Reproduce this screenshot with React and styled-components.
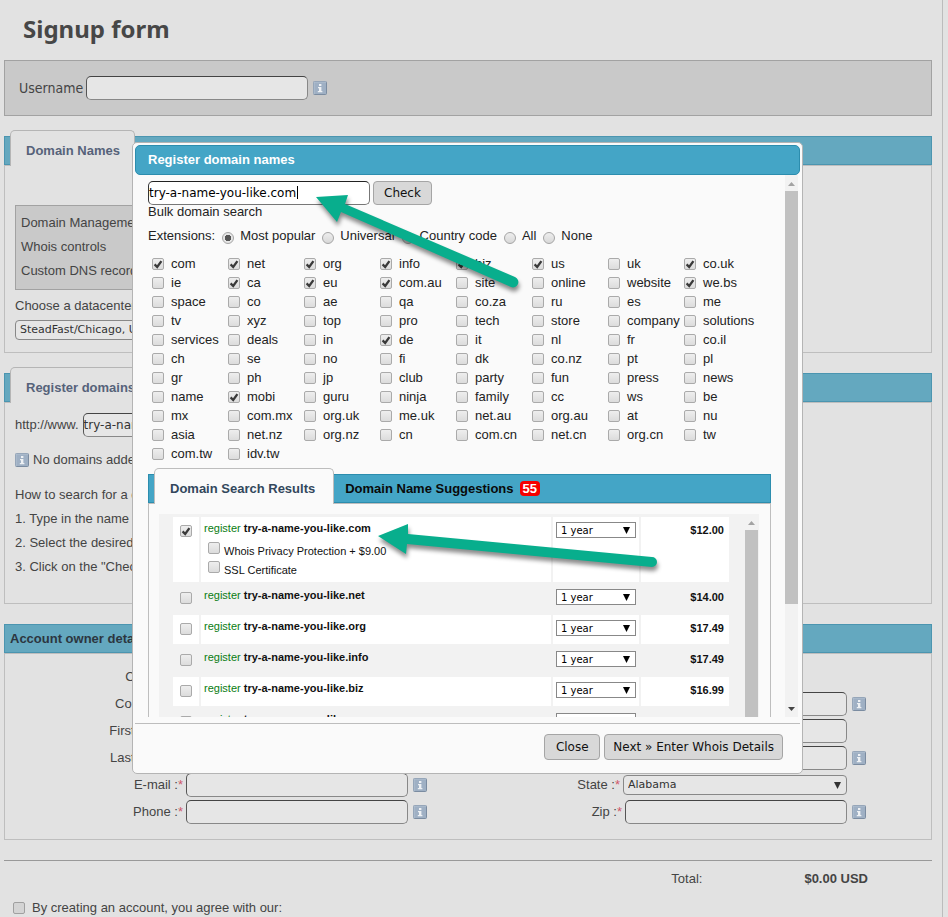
import React from "react";
import styled, { createGlobalStyle, css } from "styled-components";

const sans = '"Liberation Sans", Arial, sans-serif';
const wide = '"DejaVu Sans", Verdana, sans-serif';
const condensed = '"DejaVu Sans Condensed", Tahoma, sans-serif';

const svgUrl = (body, w, h) =>
  `url("data:image/svg+xml,${encodeURIComponent(
    `<svg xmlns='http://www.w3.org/2000/svg' width='${w}' height='${h}' viewBox='0 0 ${w} ${h}'>${body}</svg>`
  )}")`;

const checkMark = svgUrl(
  "<path d='M1.6 5.4L4.2 8L8.4 2.2' fill='none' stroke='#3a3a3a' stroke-width='2.3'/>",
  10,
  10
);
const triangle = (color) => svgUrl(`<path d='M0 0H7L3.5 7Z' fill='${color}'/>`, 7, 7);

const GlobalStyle = createGlobalStyle`
  *, *::before, *::after { box-sizing: border-box; }
  body {
    margin: 0;
    background: #e2e2e2;
    color: #444;
    font: 13px/24px ${sans};
  }
  h1, h2, p, ol { margin: 0; padding: 0; }
  input, select, button { margin: 0; font-family: ${wide}; }
`;

const Page = styled.div`
  height: 100vh;
  overflow: hidden;
  margin-right: 5px;
  padding: 0 10px 0 4px;
  border-right: 1px solid #bcbcbc;
`;

const Title = styled.h1`
  height: 60px;
  padding: 0 19px;
  font: bold 24px/57px "Noto Sans", Tahoma, sans-serif;
  color: #474747;
`;

const UserPanel = styled.div`
  display: flex;
  align-items: center;
  gap: 3px;
  height: 56px;
  padding: 0 14px;
  background: #c9c9c9;
  border: 1px solid #a2a2a2;
  font: 14px/24px ${condensed};
`;

const TextInput = styled.input`
  width: 222px;
  height: 24px;
  padding: 0;
  border: 1px solid #888;
  border-top-color: #444;
  border-left-color: #555;
  border-radius: 5px;
  background: #e6e6e6;
  color: #333;
  font-size: 12px;
  outline: none;
`;

const SearchInput = styled(TextInput)`
  color: #000;
  border-color: #222 #777 #777 #333;
  background: linear-gradient(#000, #000) 148px 4px / 1px 13px no-repeat #fff;
`;

const Section = styled.section`
  margin-top: 20px;
`;

const Bar = styled.div`
  display: flex;
  align-items: flex-start;
  height: 29px;
  padding: 0 5px;
  background: ${(p) => (p.$bright ? "#44a5c6" : "#64a8bf")};
  border: 1px solid ${(p) => (p.$bright ? "#2c8dae" : "#4b95b0")};
`;

const tabText = css`
  font: bold 13px/40px ${sans};
`;

const Tab = styled.button`
  ${tabText}
  position: relative;
  z-index: 1;
  height: 36px;
  margin-top: -7px;
  padding: ${(p) => (p.$bright ? "0 18px 0 15px" : "0 14px 0 15px")};
  border: 1px solid ${(p) => (p.$bright ? "#bdbdbd" : "#b5b5b5")};
  border-bottom: 0;
  border-radius: 5px 5px 0 0;
  background: ${(p) => (p.$bright ? "#fafafa" : "#e2e2e2")};
  color: ${(p) => (p.$bright ? "#32475c" : "#56627a")};
  white-space: nowrap;
`;

const SideTab = styled.button`
  display: flex;
  align-items: center;
  gap: 6px;
  height: 27px;
  padding: 0 11px;
  border: 0;
  background: none;
  color: #0a0a0a;
  font: bold 13px/27px ${sans};
`;

const Count = styled.span`
  padding: 0 3px;
  border-radius: 4px;
  background: #f60000;
  color: #fff;
  line-height: 15px;
`;

const BarTitle = styled.h2`
  font: bold 13px/27px ${sans};
  color: #2c3640;
`;

const Body = styled.div`
  padding: ${(p) => p.$pad};
  border: 1px solid #bebebe;
`;

const LinkBox = styled.div`
  width: 75%;
  padding: 5px 5px 6px;
  background: #c9c9c9;
  border: 1px solid #a2a2a2;
`;

const FieldLabel = styled.label`
  display: block;
  margin-top: 4px;
`;

const Select = styled.select`
  appearance: none;
  display: block;
  width: ${(p) => p.$width};
  height: ${(p) => (p.$small ? "16px" : "20px")};
  padding: ${(p) => (p.$small ? "1px 4px 0" : "0 4px")};
  border: 1px solid #888;
  border-radius: ${(p) => (p.$small ? "0" : "4px")};
  background: ${(p) => (p.$small ? triangle("#000") : triangle("#333"))} no-repeat right 5px center
    ${(p) => (p.$small ? "#fff" : "#e6e6e6")};
  color: ${(p) => (p.$small ? "#000" : "#333")};
  font-size: ${(p) => (p.$small ? "10px" : "11px")};
  line-height: 14px;
`;

const Line = styled.div`
  display: flex;
  align-items: center;
  gap: 4px;
  height: 24px;
  margin-top: ${(p) => p.$top || 0};
`;

const Steps = styled.ol`
  margin-top: 11px;
  list-style: none;
`;

const InfoSvg = styled.svg`
  display: block;
  flex: none;
`;

const Info = () => (
  <InfoSvg width="14" height="14" viewBox="0 0 14 14" aria-hidden="true">
    <rect x="0.5" y="0.5" width="13" height="13" rx="1" fill="#9fb0c4" stroke="#7b8ca1" />
    <path d="M1 13V1H13" fill="none" stroke="#b3c1d1" />
    <path d="M6 3H8.4V5H6ZM5 6H8.4V10H9.4V11.2H4.8V10H6V7.2H5Z" fill="#eef1f4" />
  </InfoSvg>
);

const Fields = styled.div`
  display: grid;
  grid-template-columns: 1fr 1fr;
  gap: 3px 0;
`;

const Field = styled.div`
  display: flex;
  align-items: center;
  justify-content: flex-end;
  gap: 3px;
  height: 24px;
`;

const InfoSlot = styled.span`
  width: 33px;
  padding-left: 2px;
`;

const Star = styled.span`
  color: #d0586a;
`;

const Rule = styled.hr`
  height: 1px;
  margin: 20px 0 6px;
  border: 0;
  background: #999;
`;

const Total = styled.div`
  display: flex;
  justify-content: flex-end;
  gap: 102px;
  padding-right: 64px;
`;

const Agree = styled.label`
  display: flex;
  align-items: center;
  gap: 7px;
  margin-top: 5px;
  padding-left: 9px;
`;

const Check = styled.input`
  appearance: none;
  flex: none;
  width: 12px;
  height: 12px;
  border: 1px solid ${(p) => (p.$dim ? "#a0a0a0" : "#aaa")};
  border-radius: 2px;
  background: linear-gradient(#eee, #dcdcdc);
  ${(p) => p.$dim && "background: #d4d4d4;"}
  &:checked {
    background: ${checkMark} no-repeat center, linear-gradient(#eee, #dcdcdc);
  }
`;

const Radio = styled.input`
  appearance: none;
  width: 12px;
  height: 12px;
  border: 1px solid #a5a5a5;
  border-radius: 50%;
  background: linear-gradient(#eee, #d8d8d8);
  &:checked {
    background: radial-gradient(circle, #555 0 3px, transparent 3px), #e6e6e6;
  }
`;

const Overlay = styled.div`
  position: fixed;
  inset: 0;
  z-index: 2;
  display: flex;
  justify-content: center;
  align-items: flex-start;
  padding: 142px 13px 0 0;
`;

const Dialog = styled.div`
  width: 671px;
  max-width: 100%;
  padding: 2px;
  background: #fafafa;
  border: 1px solid #b4b4b4;
  border-radius: 5px;
  color: #222;
`;

const DialogTitle = styled.h2`
  padding: 0 12px 1px;
  border: 1px solid #2c8dae;
  border-radius: 5px;
  background: #44a5c6;
  color: #fff;
  font: bold 13px/27px ${sans};
`;

const ScrollFrame = styled.div`
  display: flex;
  height: ${(p) => p.$height};
  overflow: hidden;
  padding-right: ${(p) => p.$right};
  background: ${(p) => p.$bg};
`;

const ScrollContent = styled.div`
  flex: 1;
  min-width: 0;
  padding: ${(p) => p.$pad};
`;

const Track = styled.div`
  display: flex;
  flex-direction: column;
  align-items: center;
  width: 13px;
  padding: ${(p) => p.$pad};
  background: #f2f2f2;
`;

const Thumb = styled.div`
  flex: ${(p) => p.$grow};
  width: 13px;
  margin-top: 5px;
  background: #c1c1c1;
`;

const Spacer = styled.div`
  flex: 1;
`;

const ArrowSvg = styled.svg`
  display: block;
  flex: none;
`;

const ScrollArrow = ({ down }) => (
  <ArrowSvg width="7" height="4" viewBox="0 0 7 4" aria-hidden="true">
    <path d={down ? "M0 0H7L3.5 4Z" : "M0 4H7L3.5 0Z"} fill={down ? "#444" : "#a3a3a3"} />
  </ArrowSvg>
);

const SearchRow = styled.form`
  display: flex;
  gap: 3px;
`;

const Button = styled.button`
  min-width: 56px;
  height: ${(p) => (p.$tall ? "26px" : "24px")};
  padding: ${(p) => (p.$tall ? "0 8px" : "0 10px")};
  border: 1px solid #a5a5a5;
  border-radius: 4px;
  background: #d8d8d8;
  color: #111;
  font-size: 12px;
  white-space: nowrap;
`;

const BulkText = styled.p`
  line-height: 14px;
`;

const RadioRow = styled.div`
  display: flex;
  align-items: center;
  margin-top: 5px;
  line-height: 24px;
`;

const RadioLabel = styled.label`
  display: flex;
  align-items: center;
  gap: 6px;
  margin-left: 7px;
  line-height: 24px;
  & > input {
    margin-top: 4px;
  }
`;

const ExtGrid = styled.div`
  display: grid;
  grid-template-columns: repeat(8, 76px);
  margin-top: 6px;
  padding-left: 4px;
`;

const ExtLabel = styled.label`
  display: flex;
  align-items: center;
  gap: 7px;
  height: 19px;
  line-height: 19px;
  white-space: nowrap;
`;

const ResultTabs = styled.div`
  margin: 11px 14px 0 0;
`;

const ResultPane = styled.div`
  padding: 10px 11px 0 10px;
  border: 1px solid #bebebe;
`;

const Table = styled.table`
  width: 100%;
  border-spacing: 2px;
  font: 11px/14px ${sans};
  color: #111;
`;

const Row = styled.tr`
  height: 29px;
  background: ${(p) => (p.$odd ? "#fff" : "transparent")};
`;

const Cell = styled.td`
  padding: ${(p) => p.$pad || "4px 3px 0"};
  width: ${(p) => p.$width || "auto"};
  vertical-align: top;
  text-align: ${(p) => p.$align || "left"};
  font-weight: ${(p) => (p.$align === "right" ? "bold" : "normal")};
`;

const RegisterLink = styled.a`
  color: #0a7d12;
  text-decoration: none;
`;

const Options = styled.div`
  padding: 7px 0 2px 4px;
`;

const Option = styled.label`
  display: flex;
  align-items: flex-start;
  gap: 4px;
  height: 19px;
  line-height: 19px;
`;

const Footer = styled.div`
  display: flex;
  justify-content: flex-end;
  gap: 4px;
  margin-top: 6px;
  padding: 10px 17px 11px;
  border-top: 1px solid #bdbdbd;
`;

const Annotations = styled.svg`
  position: fixed;
  top: 0;
  left: 0;
  z-index: 3;
  pointer-events: none;
  filter: drop-shadow(1px 4px 2px rgba(0, 0, 0, 0.45));
`;

const extensions = (
  "com net org info biz us uk co.uk " +
  "ie ca eu com.au site online website we.bs " +
  "space co ae qa co.za ru es me " +
  "tv xyz top pro tech store company solutions " +
  "services deals in de it nl fr co.il " +
  "ch se no fi dk co.nz pt pl " +
  "gr ph jp club party fun press news " +
  "name mobi guru ninja family cc ws be " +
  "mx com.mx org.uk me.uk net.au org.au at nu " +
  "asia net.nz org.nz cn com.cn net.cn org.cn tw " +
  "com.tw idv.tw"
).split(" ");
const popular = "com net org info biz us co.uk ca eu com.au we.bs de mobi".split(" ");
const groups = ["Most popular", "Universal", "Country code", "All", "None"];

const results = [
  { tld: "com", price: "$12.00", selected: true },
  { tld: "net", price: "$14.00" },
  { tld: "org", price: "$17.49" },
  { tld: "info", price: "$17.49" },
  { tld: "biz", price: "$16.99" },
  { tld: "us", price: "$16.99" },
];

const ownerFields = [
  { id: "country", label: "Country :" },
  null,
  { id: "company", label: "Company :", info: true },
  { id: "address", label: "Address :", info: true },
  { id: "first", label: "First name :", info: true },
  { id: "address2", label: "Address 2 :" },
  { id: "last", label: "Last name :", info: true },
  { id: "city", label: "City :", info: true },
  { id: "email", label: "E-mail :", info: true },
  { id: "state", label: "State :", choice: "Alabama" },
  { id: "phone", label: "Phone :", info: true },
  { id: "zip", label: "Zip :", info: true },
];

function OwnerField({ field }) {
  if (!field) return <Field />;
  const { id, label, info, choice } = field;
  return (
    <Field>
      <label htmlFor={id}>
        {label}
        <Star>*</Star>
      </label>
      {choice ? (
        <Select id={id} $width="224px" defaultValue={choice}>
          <option>{choice}</option>
        </Select>
      ) : (
        <TextInput id={id} />
      )}
      <InfoSlot>{info && <Info />}</InfoSlot>
    </Field>
  );
}

function ResultRow({ result, odd }) {
  const name = `try-a-name-you-like.${result.tld}`;
  return (
    <Row $odd={odd}>
      <Cell $width="26px" $pad="8px 7px 0">
        <Check type="checkbox" defaultChecked={result.selected} aria-label={name} />
      </Cell>
      <Cell>
        <RegisterLink href="#register">register</RegisterLink> <b>{name}</b>
        {result.selected && (
          <Options>
            <Option>
              <Check type="checkbox" /> Whois Privacy Protection + $9.00
            </Option>
            <Option>
              <Check type="checkbox" /> SSL Certificate
            </Option>
          </Options>
        )}
      </Cell>
      <Cell $width="86px" $pad="5px 3px 0">
        <Select $small $width="80px" aria-label={`Period for ${name}`} defaultValue="1 year">
          <option>1 year</option>
        </Select>
      </Cell>
      <Cell $width="88px" $align="right" $pad="6px 5px 0">
        {result.price}
      </Cell>
    </Row>
  );
}

function RegisterDialog() {
  return (
    <Overlay>
      <Dialog role="dialog" aria-labelledby="dialog-title">
        <DialogTitle id="dialog-title">Register domain names</DialogTitle>
        <ScrollFrame $height="542px" $right="2px" $bg="#fafafa">
          <ScrollContent $pad="6px 0 0 13px">
            <SearchRow onSubmit={(e) => e.preventDefault()}>
              <SearchInput aria-label="Domain name" defaultValue="try-a-name-you-like.com" />
              <Button>Check</Button>
            </SearchRow>
            <BulkText>Bulk domain search</BulkText>
            <RadioRow>
              Extensions:
              {groups.map((g, i) => (
                <RadioLabel key={g}>
                  <Radio type="radio" name="group" defaultChecked={i === 0} />
                  {g}
                </RadioLabel>
              ))}
            </RadioRow>
            <ExtGrid>
              {extensions.map((e) => (
                <ExtLabel key={e}>
                  <Check type="checkbox" defaultChecked={popular.includes(e)} />
                  {e}
                </ExtLabel>
              ))}
            </ExtGrid>
            <ResultTabs>
              <Bar $bright>
                <Tab $bright>Domain Search Results</Tab>
                <SideTab>
                  Domain Name Suggestions <Count>55</Count>
                </SideTab>
              </Bar>
              <ResultPane>
                <ScrollFrame $height="240px" $right="1px" $bg="#f2f2f2">
                  <ScrollContent $pad="1px 14px 0 12px">
                    <Table>
                      <tbody>
                        {results.map((r, i) => (
                          <ResultRow key={r.tld} result={r} odd={i % 2 === 0} />
                        ))}
                      </tbody>
                    </Table>
                  </ScrollContent>
                  <Track $pad="7px 0 0">
                    <ScrollArrow />
                    <Thumb $grow="1" />
                  </Track>
                </ScrollFrame>
              </ResultPane>
            </ResultTabs>
          </ScrollContent>
          <Track $pad="7px 0 6px">
            <ScrollArrow />
            <Thumb $grow="4" />
            <Spacer />
            <ScrollArrow down />
          </Track>
        </ScrollFrame>
        <Footer>
          <Button $tall>Close</Button>
          <Button $tall>Next » Enter Whois Details</Button>
        </Footer>
      </Dialog>
    </Overlay>
  );
}

export default function App() {
  return (
    <>
      <GlobalStyle />
      <Page>
        <Title>Signup form</Title>
        <UserPanel>
          <label htmlFor="username">Username</label>
          <TextInput id="username" />
          <InfoSlot>
            <Info />
          </InfoSlot>
        </UserPanel>

        <Section>
          <Bar>
            <Tab>Domain Names</Tab>
          </Bar>
          <Body $pad="39px 10px 10px">
            <LinkBox>
              <p>Domain Management</p>
              <p>Whois controls</p>
              <p>Custom DNS records</p>
            </LinkBox>
            <FieldLabel htmlFor="datacenter">Choose a datacenter</FieldLabel>
            <Line>
              <Select id="datacenter" $width="220px" defaultValue="SteadFast/Chicago, USA">
                <option>SteadFast/Chicago, USA</option>
              </Select>
            </Line>
          </Body>
        </Section>

        <Section>
          <Bar>
            <Tab>Register domains</Tab>
          </Bar>
          <Body $pad="10px 10px 24px">
            <Line>
              <label htmlFor="www">http://www.</label>
              <TextInput id="www" defaultValue="try-a-name-you-like.com" />
            </Line>
            <Line $top="11px">
              <Info />
              No domains added
            </Line>
            <Steps>
              <li>How to search for a domain</li>
              <li>1. Type in the name of the domain</li>
              <li>2. Select the desired extensions</li>
              <li>3. Click on the "Check" button</li>
            </Steps>
          </Body>
        </Section>

        <Section>
          <Bar>
            <BarTitle>Account owner details</BarTitle>
          </Bar>
          <Body $pad="11px 48px 15px 0">
            <Fields>
              {ownerFields.map((f, i) => (
                <OwnerField key={i} field={f} />
              ))}
            </Fields>
          </Body>
        </Section>

        <Rule />
        <Total>
          <span>Total:</span>
          <b>$0.00 USD</b>
        </Total>
        <Agree>
          <Check type="checkbox" $dim />
          By creating an account, you agree with our:
        </Agree>
      </Page>

      <RegisterDialog />

      <Annotations width="948" height="917" viewBox="0 0 948 917" aria-hidden="true">
        <path
          d="M316 197L348 195L345 204L515 277A5 5 0 0 1 511 287L341 212L337 222Z"
          fill="#08ae8d"
        />
        <path
          d="M378 536L408 524L408 534L652 557A5 5 0 0 1 652 567L407 544L406 554Z"
          fill="#08ae8d"
        />
      </Annotations>
    </>
  );
}
